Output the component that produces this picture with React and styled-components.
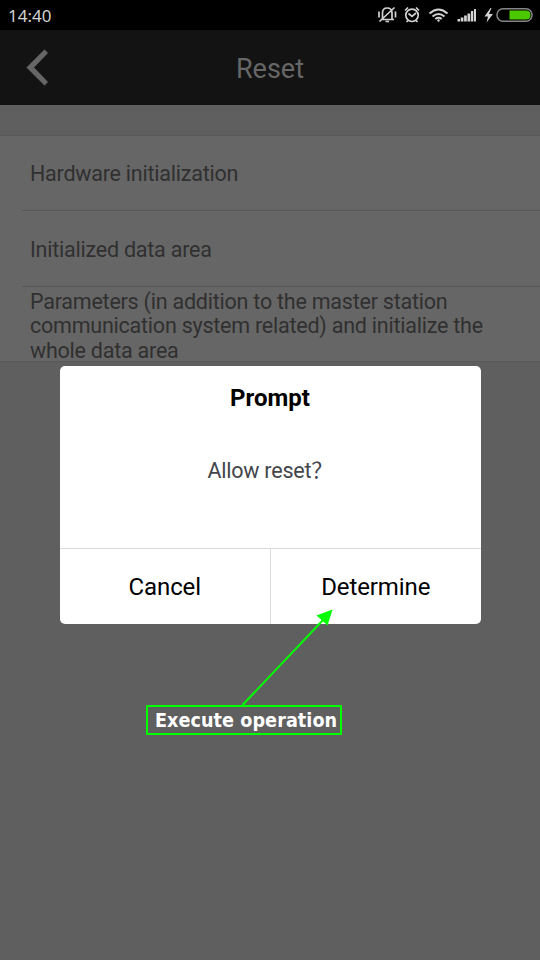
import React from "react";
import styled, { createGlobalStyle } from "styled-components";

const GlobalStyle = createGlobalStyle`
  * { box-sizing: border-box; }
  body { margin: 0; background: #5f5f5f; }
`;

const Screen = styled.div`
  position: relative;
  width: 540px;
  height: 960px;
  overflow: hidden;
  background: #5f5f5f;
  font-family: Roboto, sans-serif;
`;

const StatusBar = styled.div`
  display: flex;
  align-items: center;
  justify-content: space-between;
  height: 30px;
  padding-left: 8px;
  background: #000;
`;

const Clock = styled.span`
  font: 17px/30px "Noto Sans", sans-serif;
  padding-top: 1px;
  color: #d2d2d2;
`;

const StatusIcons = styled.svg`
  display: block;
  width: 170px;
  height: 30px;
`;

const TitleBar = styled.header`
  display: grid;
  grid-template-columns: 80px 1fr 80px;
  align-items: center;
  height: 75px;
  background: #131313;
`;

const BackIcon = styled.svg`
  display: block;
  width: 80px;
  height: 75px;
`;

const Title = styled.h1`
  margin: 0;
  padding-top: 2px;
  text-align: center;
  font-size: 27px;
  font-weight: 400;
  color: #666;
`;

const List = styled.div`
  margin-top: 30px;
  padding-left: 22px;
  background: #666;
  border-top: 1px solid #595959;
  border-bottom: 1px solid #595959;
`;

const Row = styled.div`
  display: flex;
  align-items: center;
  height: ${(p) => p.$height}px;
  padding: ${(p) => p.$inset}px 0 0 8px;
  font-size: 21.5px;
  letter-spacing: -0.23px;
  line-height: 24.5px;
  color: #303030;
  border-bottom: ${(p) => (p.$last ? "none" : "1px solid #575757")};
`;

const Dialog = styled.div`
  position: absolute;
  left: 59.5px;
  top: 366px;
  width: 421px;
  height: 258px;
  display: flex;
  flex-direction: column;
  background: #fff;
  border-radius: 5px;
  text-align: center;
`;

const DialogTitle = styled.h2`
  margin: 0;
  padding-top: 18px;
  font-size: 24px;
  line-height: 28px;
  font-weight: 700;
  color: #000;
`;

const DialogMessage = styled.p`
  flex: 1;
  margin: 0;
  padding-top: 46px;
  font-family: Roboto, "Noto Sans CJK SC", sans-serif;
  font-size: 21.5px;
  letter-spacing: -0.23px;
  line-height: 26px;
  color: #42464a;
`;

const DialogActions = styled.div`
  display: grid;
  grid-template-columns: 1fr 1fr;
  height: 76px;
  border-top: 1px solid #dcdcdc;
`;

const DialogButton = styled.button`
  padding: 1px 0 0;
  border: 0;
  border-left: ${(p) => (p.$divided ? "1px solid #dcdcdc" : "none")};
  background: none;
  font: 24px Roboto, sans-serif;
  letter-spacing: -0.1px;
  color: #000;
`;

const Callout = styled.div`
  position: absolute;
  left: 146px;
  top: 705px;
  width: 196px;
  height: 30px;
  padding-left: 7px;
  border: 2px solid #00ff00;
  font: bold 19.600px/27px "DejaVu Sans Condensed", "DejaVu Sans", sans-serif;
  font-stretch: condensed;
  letter-spacing: 0.05px;
  white-space: nowrap;
  color: #fff;
`;

const Arrow = styled.svg`
  position: absolute;
  left: 236px;
  top: 604px;
  width: 104px;
  height: 104px;
`;

export default function App() {
  return (
    <Screen>
      <GlobalStyle />
      <StatusBar>
        <Clock>14:40</Clock>
        <StatusIcons viewBox="370 0 170 30" fill="none" stroke="#d2d2d2">
          <g strokeWidth="1.7">
            <path d="M380.500 19.500h13.500M382.500 19V13q0-5 4.700-5t4.800 5v6M385.500 21.500h3.500M394.500 7.500L379.500 21.500M379 11.500v6M395.500 11.500v6" />
          </g>
          <g strokeWidth="1.7">
            <circle cx="412" cy="15.300" r="6.200" />
            <path d="M408.500 13.500l3.500 3 4-3.500M405 10.500l3-3M419 10.500l-3-3M408 20.500l-1.500 1.500M416 20.500l1.500 1.500" />
          </g>
          <g strokeWidth="2">
            <path d="M429.500 13.500q9-8 18 0M432.500 16.500q6-5 12 0M435.300 19q3.200-2.500 6.400 0" />
            <circle cx="438.500" cy="20.500" r="1.200" fill="#d2d2d2" stroke="none" />
          </g>
          <path
            d="M457.500 21.500v-2.500h2.500v2.500zM460.700 21.500v-4h2.700v4zM464.100 21.500v-6h2.700v6zM467.500 21.500v-8h2.700v8zM470.900 21.500v-10.500h2.400v10.500zM474 21.500V9h2v12.500z"
            fill="#d2d2d2"
            stroke="none"
          />
          <path d="M490.500 8l-6 8.500h3.500l-1.500 6 6.500-8.500h-4l2.500-6z" fill="#d2d2d2" stroke="none" />
          <rect x="497" y="8.700" width="35" height="12.600" rx="6" stroke="#858585" strokeWidth="1.500" />
          <path d="M509.500 10.500H526q4.500 0 4.500 4.500t-4.500 4.500h-16.500z" fill="#4cc800" stroke="none" />
        </StatusIcons>
      </StatusBar>
      <TitleBar>
        <BackIcon viewBox="0 30 80 75">
          <path
            d="M44.500 49.800L26.800 67.500L44.500 85.200L47.700 82L33.800 67.500L47.700 53z"
            fill="#666"
            stroke="#666"
            strokeWidth="0.600"
            strokeLinejoin="round"
          />
        </BackIcon>
        <Title>Reset</Title>
      </TitleBar>
      <List>
        <Row $height={75} $inset={3}>Hardware initialization</Row>
        <Row $height={76} $inset={3}>Initialized data area</Row>
        <Row $height={74} $inset={5} $last>
          Parameters (in addition to the master station
          <br />
          communication system related) and initialize the
          <br />
          whole data area
        </Row>
      </List>
      <Dialog role="dialog">
        <DialogTitle>Prompt</DialogTitle>
        <DialogMessage>Allow reset？</DialogMessage>
        <DialogActions>
          <DialogButton>Cancel</DialogButton>
          <DialogButton $divided>Determine</DialogButton>
        </DialogActions>
      </Dialog>
      <Callout>Execute operation</Callout>
      <Arrow viewBox="236 604 104 104">
        <path d="M242.500 705L324 619" stroke="#00ff00" strokeWidth="2" />
        <path d="M332.500 609.500L316.500 615.500L327.500 625.500z" fill="#00ff00" />
      </Arrow>
    </Screen>
  );
}
